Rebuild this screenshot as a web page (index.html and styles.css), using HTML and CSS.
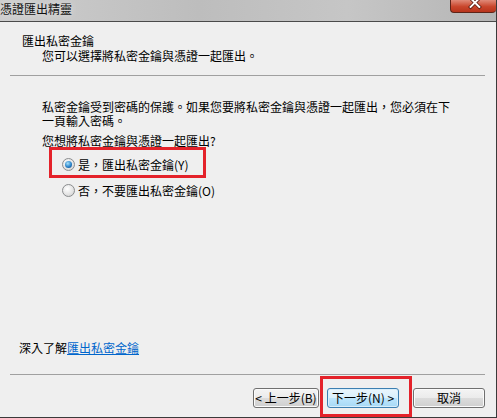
FILE: index.html
```html
<!DOCTYPE html>
<html lang="zh-Hant">
<head>
    <meta charset="UTF-8">
    <meta name="viewport" content="width=device-width, initial-scale=1.0">
    <title>憑證匯出精靈</title>
    <link rel="stylesheet" href="styles.css">
</head>
<body>

    <div class="window">
        <!-- Title Bar -->
        <div class="titlebar">
            <span class="title">憑證匯出精靈</span>
            <span class="close-btn">
                <svg width="46" height="13" viewBox="0 0 46 13">
                    <path d="M20 -2 L29 7 M29 -2 L20 7" stroke="#5a1a10" stroke-width="3.6" stroke-linecap="square"/>
                    <path d="M20 -2 L29 7 M29 -2 L20 7" stroke="#fff" stroke-width="2" stroke-linecap="square"/>
                </svg>
            </span>
        </div>

        <!-- Wizard Header -->
        <div class="header">
            <h1>匯出私密金鑰</h1>
            <p class="subtitle">您可以選擇將私密金鑰與憑證一起匯出。</p>
        </div>

        <!-- Wizard Page -->
        <div class="content">
            <p class="intro">私密金鑰受到密碼的保護。如果您要將私密金鑰與憑證一起匯出，您必須在下一頁輸入密碼。</p>
            <p class="question">您想將私密金鑰與憑證一起匯出?</p>
            <div class="highlight">
                <label class="radio"><span class="dot checked"></span>是，匯出私密金鑰(Y)</label>
            </div>
            <label class="radio second"><span class="dot"></span>否，不要匯出私密金鑰(O)</label>
        </div>

        <p class="more">深入了解<a href="#">匯出私密金鑰</a></p>

        <!-- Buttons -->
        <div class="footer">
            <button class="btn back">&lt; 上一步(B)</button>
            <span class="next-wrap">
                <button class="btn next">下一步(N) &gt;</button>
                <span class="mark"></span>
            </span>
            <button class="btn cancel">取消</button>
        </div>
    </div>

</body>
</html>
```

FILE: styles.css
```css
/* General Reset */
* {
    margin: 0;
    padding: 0;
    box-sizing: border-box;
}

body {
    font-family: "Noto Sans CJK TC", "Liberation Sans", sans-serif;
    font-size: 12px;
    line-height: 14px;
    color: #000;
    background-color: #efefef;
    overflow: hidden;
}

/* Dialog Frame */
.window {
    width: 497px;
    height: 418px;
    display: flex;
    flex-direction: column;
    border-right: 1px solid #3a3a3a;
    border-bottom: 1px solid #3a3a3a;
}

/* Title Bar */
.titlebar {
    height: 22px;
    display: flex;
    align-items: flex-start;
    background: linear-gradient(to right, #cdcdcd, #bdbdbd 40%, #c6c6c6 70%, #b5b5b5);
    border-bottom: 1px solid #4a4a4a;
}

.title {
    margin: 2px 0 0 0;
    line-height: 14px;
    color: #111;
    text-shadow: 0 0 6px #e8e8e8;
}

.close-btn {
    margin-left: auto;
    width: 46px;
    height: 13px;
    display: flex;
    background: linear-gradient(to bottom, #e08a78, #c9462c 55%, #b8341c);
    border: 1px solid #5e2418;
    border-top: none;
    border-right: none;
    border-radius: 0 0 4px 4px;
    overflow: hidden;
}

/* Wizard Header */
.header {
    margin: 0 11px 0 10px;
    padding: 12px 0 12px 12px;
    border-bottom: 1px solid #a0a0a0;
}

.header h1 {
    font-size: 12px;
    font-weight: normal;
    line-height: 14px;
}

.subtitle {
    margin: 1px 0 0 20px;
}

/* Page Content */
.content {
    flex: 1;
    padding: 24px 0 0 42px;
}

.intro {
    width: 412px;
}

.question {
    margin-top: 6px;
}

.highlight {
    width: 157px;
    margin: -1px 0 0 7px;
    padding: 8px 0 4px 10px;
    border: 3px solid #e4222a;
}

.radio {
    display: flex;
    align-items: center;
    height: 13px;
    gap: 3px;
    white-space: nowrap;
}

.radio.second {
    margin: 6px 0 0 20px;
}

.dot {
    width: 13px;
    height: 13px;
    border-radius: 50%;
    border: 1px solid #8a8c8e;
    background: radial-gradient(circle at 40% 35%, #ffffff, #e2e2e2 60%, #c9c9c9);
    display: flex;
    align-items: center;
    justify-content: center;
}

.dot.checked::after {
    content: "";
    width: 7px;
    height: 7px;
    border-radius: 50%;
    background: radial-gradient(circle at 40% 35%, #a6e1fb, #2a83c9 55%, #0f3f78);
}

/* Learn More Link */
.more {
    padding-left: 19px;
    margin-bottom: 19px;
}

.more a {
    color: #0066cc;
}

/* Footer Buttons */
.footer {
    margin: 0 11px 0 10px;
    padding: 13px 0 9px;
    border-top: 1px solid #a0a0a0;
    display: flex;
    justify-content: flex-end;
    align-items: flex-start;
}

.btn {
    height: 20px;
    font-family: inherit;
    font-size: 12px;
    line-height: 16px;
    color: #000;
    border: 1px solid #707070;
    border-radius: 3px;
    background: linear-gradient(to bottom, #f4f4f4, #ebebeb 50%, #dcdcdc 50%, #cfcfcf);
    box-shadow: inset 0 0 0 1px #fbfbfb;
}

.back {
    width: 66px;
}

.next-wrap {
    position: relative;
    margin-left: 8px;
    display: flex;
}

.next {
    width: 72px;
    border-color: #3c7fb1;
    background: linear-gradient(to bottom, #eaf6fd, #d9f0fc 50%, #bee6fd 50%, #a7d9f5);
    box-shadow: inset 0 0 0 1px #d8eefb;
}

.mark {
    position: absolute;
    top: -12px;
    left: -7px;
    right: -13px;
    bottom: -9px;
    border: 3px solid #e4222a;
}

.cancel {
    width: 72px;
    margin-left: 14px;
}
```
